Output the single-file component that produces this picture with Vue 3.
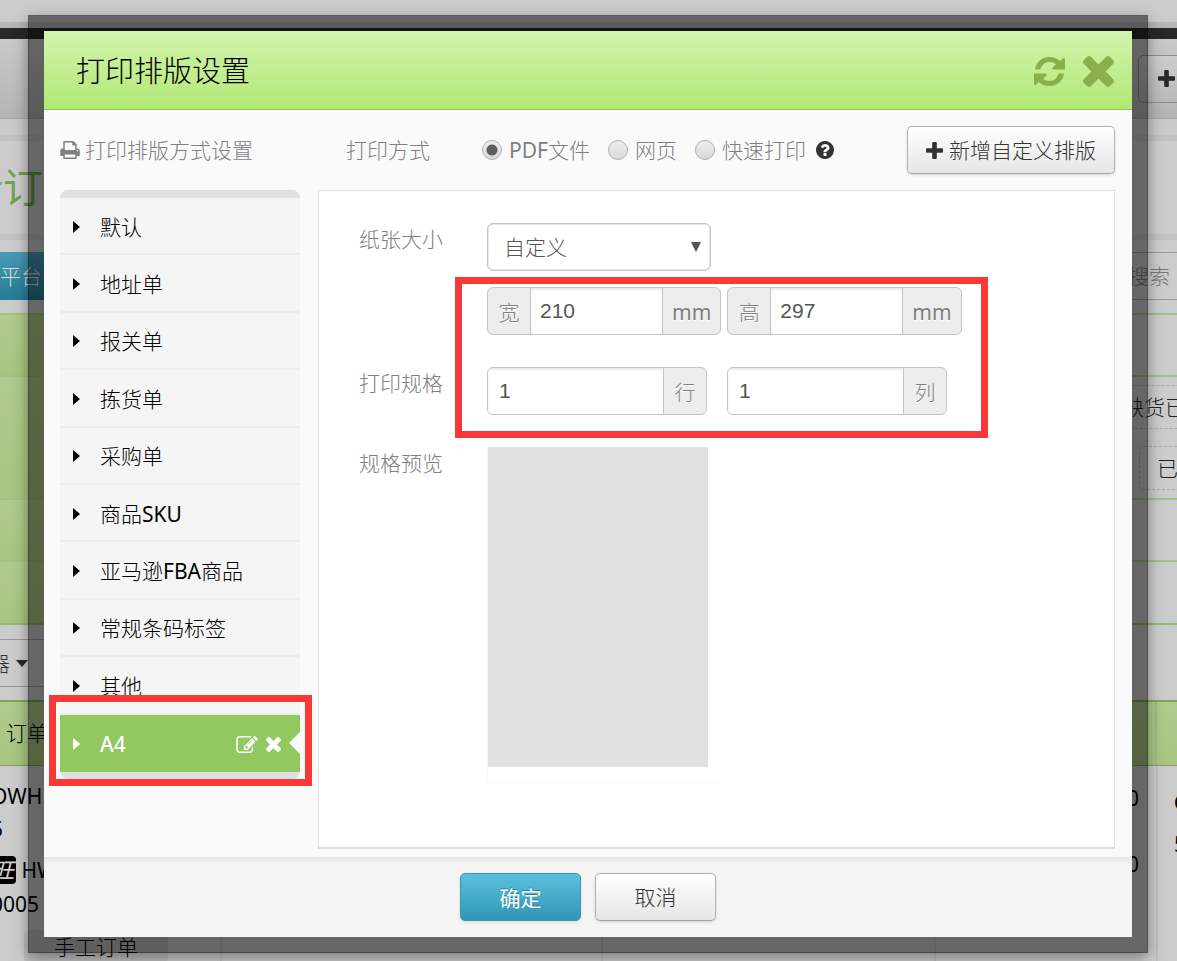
<script setup>
import { ref } from 'vue'

const layouts = ['默认', '地址单', '报关单', '拣货单', '采购单', '商品SKU', '亚马逊FBA商品', '常规条码标签', '其他']
const modes = ['PDF文件', '网页', '快速打印']
const mode = ref('PDF文件')
const paper = ref('自定义')
const width = ref('210')
const height = ref('297')
const rows = ref('1')
const cols = ref('1')

const plus = 'M1600 736v192q0 40-28 68t-68 28h-416v416q0 40-28 68t-68 28h-192q-40 0-68-28t-28-68v-416h-416q-40 0-68-28t-28-68v-192q0-40 28-68t68-28h416v-416q0-40 28-68t68-28h192q40 0 68 28t28 68v416h416q40 0 68 28t28 68z'
const times = 'M1490 1322q0 40-28 68l-136 136q-28 28-68 28t-68-28l-294-294-294 294q-28 28-68 28t-68-28l-136-136q-28-28-28-68t28-68l294-294-294-294q-28-28-28-68t28-68l136-136q28-28 68-28t68 28l294 294 294-294q28-28 68-28t68 28l136 136q28 28 28 68t-28 68l-294 294 294 294q28 28 28 68z'
</script>

<template>
  <div class="app">
    <div class="page" aria-hidden="true">
      <div class="strip"></div>
      <div class="topbar"></div>
      <div class="toolbar"><span class="tool-btn"><svg viewBox="192 128 1408 1408"><path :d="plus" /></svg></span></div>
      <div class="gap"></div>
      <div class="title-band"><span>新订单</span></div>
      <div class="tabs"><span class="tab">平台</span><span class="search">搜索</span></div>
      <div class="filters">
        <div class="frow r1"></div>
        <div class="frow r2">
          <span class="chip chip-a">缺货已</span>
          <span class="chip chip-b">已</span>
        </div>
        <div class="frow r3"></div>
        <div class="frow r4"></div>
      </div>
      <div class="bulk"><span>器</span><i class="caret"></i></div>
      <div class="thead"><span>订单</span><span class="th-end"></span></div>
      <div class="tbody">
        <div class="td first">
          <p class="id">OWH</p>
          <p class="id-end">5</p>
          <p class="ww"><b>旺</b> HW</p>
          <p class="num">0005</p>
          <p class="manual">手工订单</p>
        </div>
        <div class="td second"></div>
        <div class="td third"></div>
        <div class="td amounts"><p>0</p><p>0</p></div>
        <div class="td last"><p>●</p><p>5</p></div>
      </div>
    </div>

    <div class="modal" role="dialog" aria-labelledby="dlg-title">
      <header class="head">
        <h1 id="dlg-title">打印排版设置</h1>
        <div class="head-actions">
          <button type="button" aria-label="刷新">
            <svg class="ic-refresh" viewBox="0 0 31 31">
              <path d="M1 13.500C2 6 8 1 15.500 1c4.200 0 7.900 1.500 10.700 4l2.600-2.600c.8-.8 2.200-.3 2.200.9V13.500H19.500c-1.200 0-1.700-1.300-.9-2.100l3.400-3.200C20.200 6.800 18 6 15.500 6c-4.500 0-8 3-9 7.500z" />
              <path d="M30 17.500C29 25 23 30 15.500 30c-4.200 0-7.900-1.500-10.700-4l-2.600 2.600c-.8.8-2.200.3-2.200-.9V17.500H11.500c1.200 0 1.700 1.300.9 2.100l-3.400 3.200c1.800 1.400 4 2.200 6.500 2.200 4.500 0 8-3 9-7.500z" />
            </svg>
          </button>
          <button type="button" aria-label="关闭">
            <svg class="ic-close" viewBox="302 366 1188 1188"><path :d="times" /></svg>
          </button>
        </div>
      </header>

      <div class="body">
        <div class="top">
          <h2>
            <svg viewBox="64 128 1664 1536"><path d="M448 1536h896v-256h-896v256zm0-640h896v-384h-160q-40 0-68-28t-28-68v-160h-640v640zm1152 64q0-26-19-45t-45-19-45 19-19 45 19 45 45 19 45-19 19-45zm128 0v416q0 13-9.500 22.500t-22.500 9.500h-224v160q0 40-28 68t-68 28h-960q-40 0-68-28t-28-68v-160h-224q-13 0-22.500-9.500t-9.500-22.500v-416q0-79 56.500-135.500t135.500-56.500h64v-544q0-40 28-68t68-28h672q40 0 88 20t76 48l152 152q28 28 48 76t20 88v256h64q79 0 135.500 56.500t56.500 135.500z" /></svg>
            打印排版方式设置
          </h2>
          <fieldset>
            <legend>打印方式</legend>
            <label v-for="m in modes" :key="m"><input v-model="mode" type="radio" name="mode" :value="m">{{ m }}</label>
            <svg class="help" viewBox="128 128 1536 1536"><path d="M1024 1376v-192q0-14-9-23t-23-9h-192q-14 0-23 9t-9 23v192q0 14 9 23t23 9h192q14 0 23-9t9-23zm256-672q0-88-55.500-163t-138.500-116-170-41q-243 0-371 213-15 24 8 42l132 100q7 6 19 6 16 0 25-12 53-68 86-92 34-24 86-24 48 0 85.500 26t37.500 59q0 38-20 61t-68 45q-63 28-115.500 86.500t-52.500 125.500v36q0 14 9 23t23 9h192q14 0 23-9t9-23q0-19 21.500-49.500t54.500-49.500q32-18 49-28.500t46-35 44.500-48 28-60.500 12.500-81zm384 192q0 209-103 385.500t-279.500 279.500-385.500 103-385.500-103-279.500-279.500-103-385.500 103-385.500 279.500-279.500 385.500-103 385.500 103 279.500 279.500 103 385.500z" /></svg>
          </fieldset>
          <button type="button" class="btn add"><svg viewBox="192 128 1408 1408"><path :d="plus" /></svg>新增自定义排版</button>
        </div>

        <div class="columns">
          <nav>
            <ul>
              <li v-for="l in layouts" :key="l"><a href="#"><i class="arrow"></i>{{ l }}</a></li>
              <li class="active">
                <a href="#"><i class="arrow"></i>A4</a>
                <button type="button" aria-label="编辑"><svg class="ic-edit" viewBox="0 128 1792 1408"><path d="M888 1184l116-116-152-152-116 116v56h96v96h56zm440-720q-16-16-33 1l-350 350q-17 17-1 33t33-1l350-350q17-17 1-33zm80 594v190q0 119-84.500 203.500t-203.500 84.500h-832q-119 0-203.500-84.500t-84.500-203.500v-832q0-119 84.500-203.500t203.500-84.500h832q63 0 117 25 15 7 18 23 3 17-9 29l-49 49q-14 14-32 8-23-6-45-6h-832q-66 0-113 47t-47 113v832q0 66 47 113t113 47h832q66 0 113-47t47-113v-126q0-13 9-22l64-64q15-15 35-7t20 29zm-96-738l288 288-672 672h-288v-288zm444 132l-92 92-288-288 92-92q28-28 68-28t68 28l152 152q28 28 28 68t-28 68z" /></svg></button>
                <button type="button" aria-label="删除"><svg class="ic-del" viewBox="302 366 1188 1188"><path :d="times" /></svg></button>
                <i class="notch"></i>
                <i class="mark"></i>
              </li>
            </ul>
          </nav>

          <form class="panel" @submit.prevent>
            <label class="lbl" for="paper">纸张大小</label>
            <div class="select">
              <select id="paper" v-model="paper"><option>自定义</option><option>A4</option></select>
              <i></i>
            </div>
            <div class="highlight">
              <div class="line">
                <div class="group"><label class="addon" for="w">宽</label><input id="w" v-model="width" type="text"><span class="addon">mm</span></div>
                <div class="group"><label class="addon" for="h">高</label><input id="h" v-model="height" type="text"><span class="addon">mm</span></div>
              </div>
              <div class="line wide">
                <div class="group"><input id="rows" v-model="rows" type="text" aria-label="行"><span class="addon">行</span></div>
                <div class="group"><input id="cols" v-model="cols" type="text" aria-label="列"><span class="addon">列</span></div>
              </div>
              <i class="mark"></i>
            </div>
            <label class="lbl spec" for="rows">打印规格</label>
            <span class="lbl view">规格预览</span>
            <div class="preview"><div class="cell"></div></div>
          </form>
        </div>
      </div>

      <footer>
        <button type="button" class="btn primary">确定</button>
        <button type="button" class="btn">取消</button>
      </footer>
    </div>
  </div>
</template>

<style>
body {
  margin: 0;
  background: #ccc;
}
</style>

<style scoped>
* {
  box-sizing: border-box;
}
.app {
  position: relative;
  display: flow-root;
  min-height: 100vh;
  overflow: hidden;
  background: #ccc;
  color: #000;
  font: 400 21px/32px "Noto Sans", "Noto Sans CJK SC Light", "Noto Sans CJK SC", sans-serif;
}
button,
input,
select {
  font: inherit;
  color: inherit;
}
button {
  padding: 0;
  border: 0;
  background: none;
  cursor: pointer;
}
svg {
  display: block;
  flex: none;
  fill: currentColor;
}
p,
h1,
h2,
ul {
  margin: 0;
  padding: 0;
  font-weight: inherit;
}

/* page behind the dialog */
.page {
  position: absolute;
  inset: 0;
  overflow: hidden;
  white-space: nowrap;
}
.strip {
  height: 28px;
  border-bottom: 6px solid #b6b6b6;
}
.topbar {
  height: 11px;
  background: #282828;
}
.toolbar {
  display: flex;
  justify-content: flex-end;
  align-items: flex-start;
  height: 80px;
  padding-top: 16px;
  background: linear-gradient(#cacaca, #b4b4b4);
  border-bottom: 1px solid #a6a6a6;
  overflow: hidden;
}
.tool-btn {
  flex: none;
  width: 80px;
  height: 48px;
  margin-right: -41px;
  padding: 14px 19px;
  border: 1px solid #8c8c8c;
  border-radius: 5px;
  background: linear-gradient(#cdcdcd, #b9b9b9);
  color: #282828;
}
.tool-btn svg {
  width: 17px;
}
.gap {
  height: 16px;
  background: #cacaca;
}
.title-band {
  height: 105px;
  border: solid #c2c2c2;
  border-width: 6px 0;
  color: #71a14a;
  font-family: "Noto Sans CJK SC", sans-serif;
  font-size: 40px;
  line-height: 88px;
}
.title-band span {
  margin-left: -37px;
}
.tabs {
  display: flex;
  justify-content: space-between;
  margin: 12px 0 13px;
  line-height: 48px;
}
.tab {
  width: 120px;
  background: linear-gradient(#489bb6, #247b94);
  color: #ddd;
}
.search {
  width: 147px;
  padding-left: 98px;
  border: solid #9a9a9a;
  border-width: 1px 0;
  color: #777;
  line-height: 46px;
}
.frow {
  display: flow-root;
  border-top: 2px solid #a3c383;
  background: linear-gradient(#b0cb8e, #a9c581) no-repeat 0 0 / 200px 100%;
}
.r1 {
  height: 62px;
}
.r2 {
  height: 123px;
}
.r3 {
  height: 62px;
}
.r4 {
  height: 65px;
  border-bottom: 2px solid #94b96f;
}
.chip {
  display: block;
  width: 160px;
  height: 44px;
  border: 1px dashed #a8a8a8;
  border-radius: 5px;
  line-height: 43px;
  color: #222;
}
.chip-a {
  margin: 8px -60px 0 auto;
  padding-left: 45px;
}
.chip-b {
  margin: 17px -122px 0 auto;
  padding-left: 17px;
}
.bulk {
  display: flex;
  align-items: center;
  gap: 6px;
  width: 120px;
  height: 48px;
  margin: 14px 0 13px -12px;
  border: 1px solid #999;
  border-radius: 4px;
  color: #333;
}
.caret {
  border: solid transparent;
  border-top-color: #282828;
  border-width: 7px 6px 0;
}
.thead {
  display: flex;
  justify-content: space-between;
  height: 66px;
  border: solid #7ba953;
  border-width: 2px 0 1px;
  background: linear-gradient(#b0cb8e, #a9c581);
  padding-left: 6px;
  line-height: 62px;
}
.th-end {
  width: 22px;
  border-left: 2px solid #9fbd80;
}
.tbody {
  display: grid;
  grid-template-columns: 222fr 381fr 333fr 222fr 19px;
  height: 195px;
}
.td {
  min-width: 0;
  border-right: 2px solid #bbc4b3;
  padding-top: 14px;
}
.first p {
  margin-left: -9px;
}
.id {
  height: 33px;
}
.id-end {
  height: 41px;
}
.ww {
  height: 34px;
}
.num {
  height: 42px;
}
.ww b {
  padding: 0 2px;
  border-radius: 4px;
  background: #000;
  color: #ccc;
  font-style: italic;
}
.first .manual {
  width: 144px;
  margin-left: 24px;
  padding-left: 30px;
  border-radius: 6px;
  background: #bfbfbf;
  line-height: 34px;
}
.amounts {
  padding-top: 16px;
  padding-right: 17px;
  text-align: right;
}
.amounts p {
  height: 66px;
}
.last {
  padding: 20px 0 0 16px;
  border: 0;
}
.last p {
  height: 42px;
}

/* dialog */
.modal {
  position: relative;
  margin: 15px 29px 8px 28px;
  border: 16px solid rgba(0, 0, 0, 0.5);
  background: #fafafa;
  background-clip: padding-box;
  box-shadow: 0 5px 14px rgba(0, 0, 0, 0.4);
}
.head {
  display: flex;
  align-items: center;
  justify-content: space-between;
  height: 79px;
  padding: 2px 18px 0 32px;
  border-bottom: 1px solid #91c45c;
  background: linear-gradient(#d3f3ad, #b1e974);
}
.head h1 {
  font-size: 29px;
  line-height: 40px;
}
.head-actions {
  display: flex;
  align-items: center;
  gap: 18px;
  color: #89b04b;
}
.ic-refresh,
.ic-close {
  width: 31px;
  height: 31px;
}
.body {
  padding: 0 17px 8px 16px;
}
.top {
  display: flex;
  align-items: center;
  padding: 16px 0;
  color: #808080;
}
.top h2 {
  display: flex;
  align-items: center;
  gap: 5px;
  width: 286px;
  font-size: 21px;
}
.top h2 svg {
  width: 20px;
  height: 18px;
}
fieldset {
  display: flex;
  align-items: center;
  gap: 18px;
  margin: 0;
  padding: 0;
  border: 0;
}
legend {
  float: left;
  width: 118px;
  padding: 0;
}
fieldset label {
  display: flex;
  align-items: center;
  gap: 7px;
}
input[type="radio"] {
  width: 20px;
  height: 20px;
  margin: 0;
  appearance: none;
  border: 1px solid #b0b0b0;
  border-radius: 50%;
  background: linear-gradient(#eee, #d8d8d8);
}
input[type="radio"]:checked {
  background: radial-gradient(circle, #606060 5px, transparent 6px), linear-gradient(#eee, #d8d8d8);
}
.help {
  width: 18px;
  height: 18px;
  margin-left: -8px;
  color: #333;
}
.btn {
  display: flex;
  align-items: center;
  justify-content: center;
  gap: 6px;
  min-width: 121px;
  height: 48px;
  padding: 0 18px;
  border: 1px solid #b3b3b3;
  border-bottom-color: #a2a2a2;
  border-radius: 5px;
  background: linear-gradient(#fff, #e6e6e6);
  box-shadow: 0 1px 3px rgba(0, 0, 0, 0.15);
  color: #333;
}
.add {
  margin-left: auto;
}
.add svg {
  width: 17px;
}
.columns {
  display: flex;
  align-items: flex-start;
  gap: 18px;
}
nav {
  flex: none;
  width: 240px;
  border-top: 8px solid #e0e0e0;
  border-bottom: 7px solid #e0e0e0;
  border-radius: 8px;
  background: #f5f5f5;
}
nav ul {
  display: grid;
  grid-auto-rows: 1fr;
  min-height: 574px;
  list-style: none;
}
nav li {
  position: relative;
  display: flex;
  align-items: center;
  padding-top: 2px;
  border-bottom: 2px solid #ededed;
}
nav a {
  display: flex;
  flex: 1;
  align-items: center;
  gap: 20px;
  padding-left: 12px;
  color: inherit;
  text-decoration: none;
}
.arrow {
  border: solid transparent;
  border-left-color: currentColor;
  border-width: 6px 0 6px 7px;
  margin-left: 1px;
}
nav .active {
  gap: 8px;
  padding-right: 19px;
  border-bottom: 0;
  background: #93c75f;
  color: #fff;
  font-weight: 500;
}
.ic-edit {
  width: 22px;
  height: 17px;
}
.ic-del {
  width: 15px;
  height: 15px;
}
.notch {
  position: absolute;
  right: 0;
  top: 17px;
  border: solid transparent;
  border-right-color: #fafafa;
  border-width: 11px 11px 11px 0;
}
.mark {
  position: absolute;
  border: 7px solid #fb3838;
  pointer-events: none;
}
.active .mark {
  inset: -20px -12px -14px -11px;
}
.panel {
  flex: 1;
  display: grid;
  grid-template-columns: 128px 1fr;
  grid-template-rows: 48px 64px 64px 1fr;
  row-gap: 16px;
  align-items: start;
  min-height: 659px;
  padding: 32px 40px 64px;
  border: 1px solid #e0e0e0;
  border-bottom-width: 2px;
  background: #fff;
  color: #808080;
}
.spec {
  grid-area: 3 / 1;
}
.view {
  grid-area: 4 / 1;
}
.highlight {
  position: relative;
  grid-area: 2 / 2 / 4 / 3;
  justify-self: start;
}
.highlight .mark {
  inset: -10px -26px -23px -32px;
}
.line {
  display: flex;
  gap: 6px;
}
.wide {
  gap: 20px;
  margin-top: 32px;
}
.select {
  position: relative;
  width: 224px;
}
.select select {
  width: 100%;
  height: 48px;
  padding: 0 16px;
  appearance: none;
  border: 1px solid #c4c4c4;
  border-radius: 6px;
  background: #fff;
  box-shadow: inset 0 0 0 1px #e6e6e6;
  color: #555;
}
.select i {
  position: absolute;
  right: 10px;
  top: 19px;
  border: solid transparent;
  border-top-color: #555;
  border-width: 10px 5px 0;
  pointer-events: none;
}
.group {
  display: flex;
  height: 48px;
  border: 1px solid #c4c4c4;
  border-radius: 6px;
  background: #ededed;
  overflow: hidden;
  line-height: 48px;
}
.group input {
  width: 133px;
  padding: 0 9px;
  border: 1px solid #c4c4c4;
  border-width: 0 1px;
  border-radius: 0;
  background: #fff;
  box-shadow: inset 0 2px 2px rgba(0, 0, 0, 0.08);
  color: #555;
  font: 400 21px "Liberation Sans", Arial, sans-serif;
}
.wide input {
  width: 176px;
  padding: 0 11px;
  border-left: 0;
}
.addon {
  min-width: 42px;
  padding: 0 9px;
  text-align: center;
  text-shadow: 0 1px 0 #fff;
}
.preview {
  grid-area: 4 / 2;
  width: 232px;
  padding-bottom: 15px;
  border: solid #fafafa;
  border-width: 0 0 1px 1px;
}
.cell {
  width: 220px;
  height: 320px;
  background: #e0e0e0;
}
footer {
  display: flex;
  justify-content: center;
  gap: 14px;
  padding: 16px 0;
  background: #f5f5f5;
  box-shadow: inset 0 6px 6px -3px #e2e2e2;
}
.primary {
  border-color: #3f97b3;
  background: linear-gradient(#5bc0de, #2f96b4);
  color: #fff;
  font-family: "Noto Sans CJK SC", sans-serif;
  text-shadow: 0 -1px 0 rgba(0, 0, 0, 0.3);
}
</style>
